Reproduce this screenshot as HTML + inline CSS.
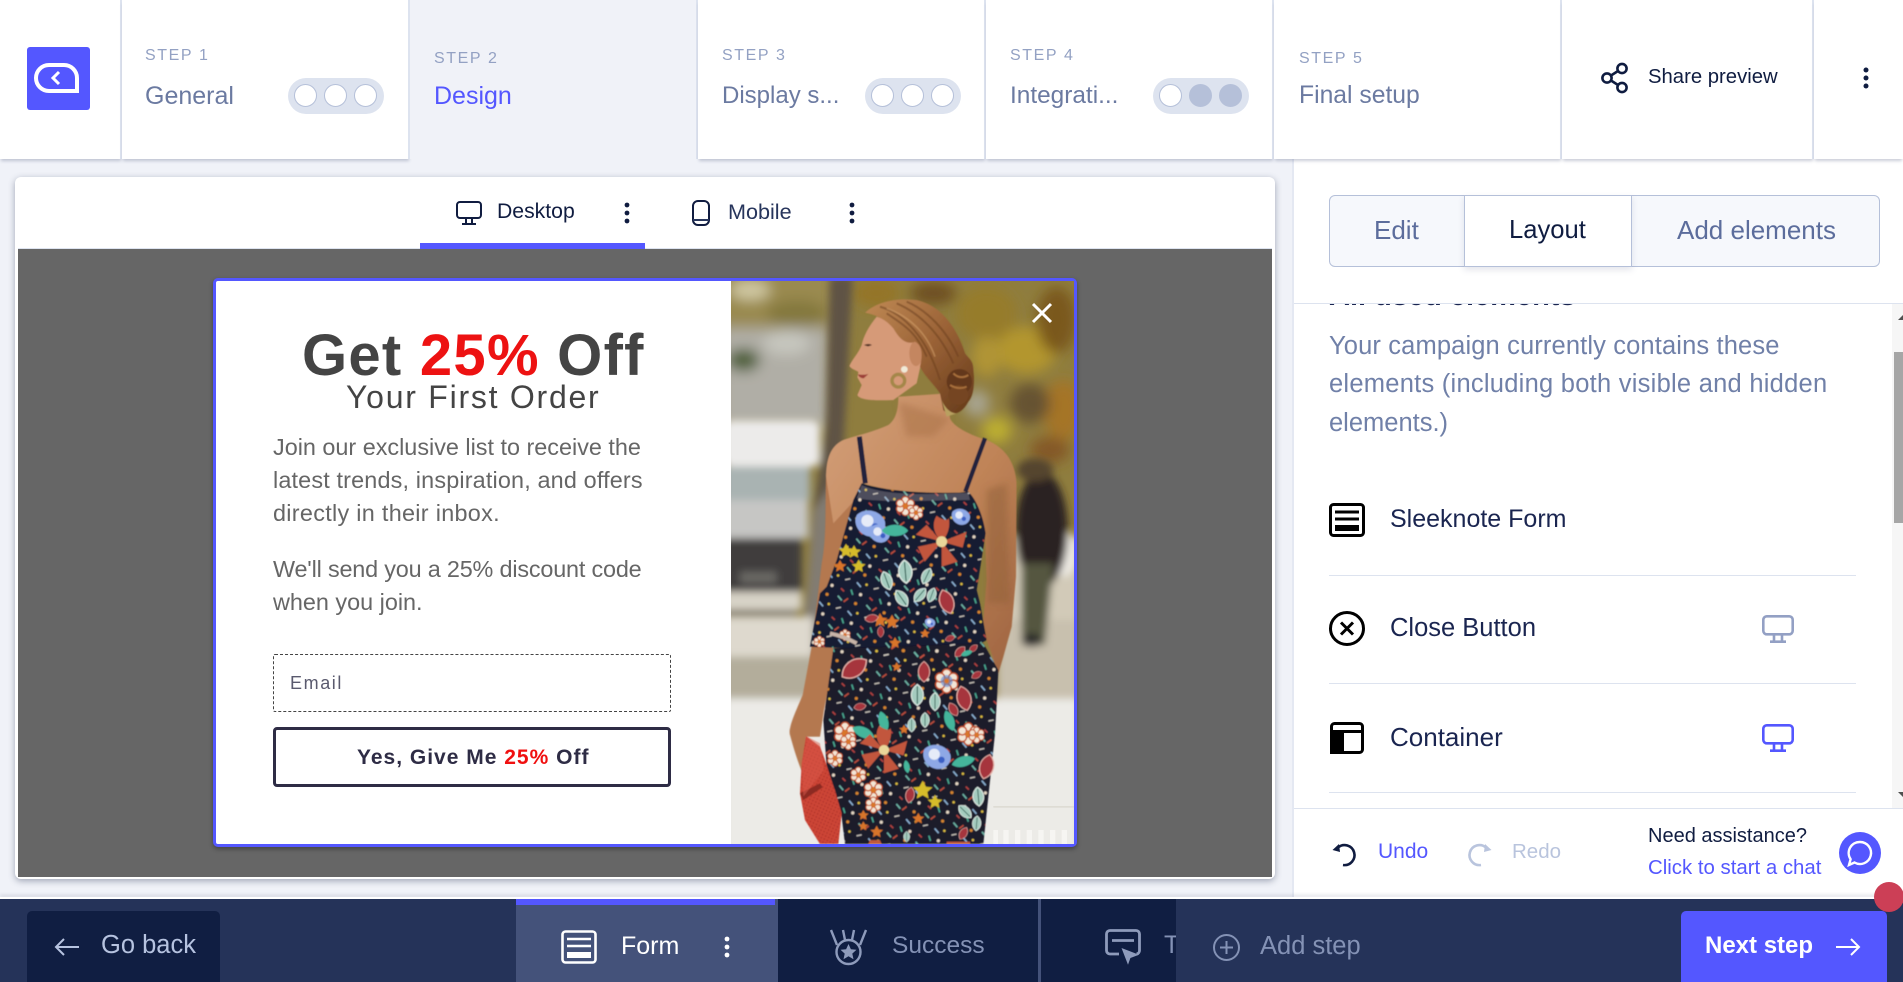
<!DOCTYPE html>
<html lang="en"><head><meta charset="utf-8"><title>Design</title>
<style>
*{box-sizing:border-box}
html,body{margin:0;padding:0;width:1903px;height:982px;overflow:hidden;background:#f0f2f8;font-family:"Liberation Sans",sans-serif}
#r{position:relative;width:1903px;height:982px;overflow:hidden}
.a{position:absolute}
.t{position:absolute;white-space:nowrap;line-height:30px}
.seg{position:absolute;top:0;height:159px;background:#fff;box-shadow:0 3px 3px -1px rgba(70,80,120,.28);border-right:2px solid #dde3ef}
.st{font-size:16px;letter-spacing:1.6px;color:#93a1c3}
.ti{font-size:25px;color:#6b7aa1}
.pill{position:absolute;top:78px;width:96px;height:36px;border-radius:18px;background:#dde3ef}
.pill i{position:absolute;top:6px;width:23px;height:23px;border-radius:50%;background:#fff;border:1px solid #b5c0d9}
.pill i.on{background:#b5c0d9}
.pill i:nth-child(1){left:6px}.pill i:nth-child(2){left:36px}.pill i:nth-child(3){left:66px}
.b{font-size:23.4px;color:#666}
.it{font-size:25.5px;color:#1a2550}
.dv{position:absolute;left:1329px;width:527px;height:1px;background:#dde3ef}
svg{position:absolute;display:block;overflow:visible}
</style></head><body><div id="r">

<!-- right panel bg -->
<div class="a" style="left:1292px;top:159px;width:611px;height:740px;background:#fff;border-left:2px solid #e4e8f2"></div>

<!-- top bar -->
<div class="seg" style="left:0;width:122px"></div>
<div class="a" style="left:27px;top:47px;width:63px;height:63px;background:#5457ff;border-radius:3px"></div>
<svg style="left:27px;top:47px" width="63" height="63" fill="none" stroke="#fff"><path d="M22 18h15a13 13 0 0 1 13 13v13H22a13 13 0 0 1 0-26z" stroke-width="4"/><path d="M32 25l-6 6 6 6" stroke-width="3"/></svg>
<div class="seg" style="left:122px;width:288px"></div>
<div class="a" style="left:410px;top:0;width:288px;height:159px;background:#f0f2f8;border-right:2px solid #dde3ef"></div>
<div class="seg" style="left:698px;width:288px"></div>
<div class="seg" style="left:986px;width:288px"></div>
<div class="seg" style="left:1274px;width:288px"></div>
<div class="seg" style="left:1562px;width:252px"></div>
<div class="seg" style="left:1814px;width:89px;border-right:0"></div>

<div class="t st" style="left:145px;top:41px">STEP 1</div>
<div class="t ti" style="left:145px;top:81px">General</div>
<div class="pill" style="left:288px"><i></i><i></i><i></i></div>
<div class="t st" style="left:434px;top:44px">STEP 2</div>
<div class="t ti" style="left:434px;top:81px;color:#5457ff">Design</div>
<div class="t st" style="left:722px;top:41px">STEP 3</div>
<div class="t ti" style="left:722px;top:81px;font-size:24px">Display s...</div>
<div class="pill" style="left:865px"><i></i><i></i><i></i></div>
<div class="t st" style="left:1010px;top:41px">STEP 4</div>
<div class="t ti" style="left:1010px;top:81px;font-size:24.4px">Integrati...</div>
<div class="pill" style="left:1153px"><i></i><i class="on"></i><i class="on"></i></div>
<div class="t st" style="left:1299px;top:44px">STEP 5</div>
<div class="t ti" style="left:1299px;top:81px;font-size:24.7px">Final setup</div>

<svg style="left:1600px;top:63px" width="30" height="30" fill="none" stroke="#0f1c40" stroke-width="2.6"><circle cx="7" cy="15" r="4.6"/><circle cx="22" cy="5.5" r="4.6"/><circle cx="22" cy="24.5" r="4.6"/><path d="M11 12.5l7-4.5M11 17.5l7 4.5"/></svg>
<div class="t" style="left:1648px;top:62px;font-size:20.3px;color:#0f1c40">Share preview</div>
<svg style="left:1862px;top:66px" width="8" height="24" fill="#0f1c40"><circle cx="4" cy="4" r="2.5"/><circle cx="4" cy="12" r="2.5"/><circle cx="4" cy="20" r="2.5"/></svg>

<!-- canvas card -->
<div class="a" style="left:15px;top:177px;width:1260px;height:702px;background:#fff;border-radius:6px;box-shadow:0 2px 7px rgba(60,70,100,.45)"></div>
<div class="a" style="left:18px;top:248px;width:1254px;height:1px;background:#dde3ef"></div>
<div class="a" style="left:18px;top:249px;width:1254px;height:628px;background:#666"></div>
<div class="a" style="left:420px;top:243px;width:225px;height:6px;background:#5457ff"></div>

<svg style="left:456px;top:201px" width="26" height="24" fill="none" stroke="#101c40" stroke-width="2"><rect x="1" y="1" width="24" height="16" rx="3"/><path d="M10 17v5M16 17v5M6 23h14"/></svg>
<div class="t" style="left:497px;top:197px;font-size:21.2px;color:#101c40">Desktop</div>
<svg style="left:623px;top:201px" width="8" height="24" fill="#101c40"><circle cx="4" cy="4" r="2.4"/><circle cx="4" cy="12" r="2.4"/><circle cx="4" cy="20" r="2.4"/></svg>
<svg style="left:692px;top:200px" width="18" height="26" fill="none" stroke="#101c40" stroke-width="2"><rect x="1" y="1" width="16" height="24" rx="5"/><path d="M1 20h16" stroke="#27355c"/></svg>
<div class="t" style="left:728px;top:197px;font-size:21.6px;color:#27355c">Mobile</div>
<svg style="left:848px;top:201px" width="8" height="24" fill="#101c40"><circle cx="4" cy="4" r="2.4"/><circle cx="4" cy="12" r="2.4"/><circle cx="4" cy="20" r="2.4"/></svg>

<!-- popup -->
<div class="a" style="left:213px;top:278px;width:864px;height:569px;background:#fff;border:3px solid #5457ff;border-radius:5px;box-shadow:0 2px 5px rgba(0,0,0,.35)"></div>
<svg style="left:731px;top:281px" width="343" height="563" viewBox="33 33 1029 1689" preserveAspectRatio="none">
<defs>
<clipPath id="cp"><rect x="33" y="33" width="1029" height="1689"/></clipPath>
<filter id="bl" x="-20%" y="-20%" width="140%" height="140%"><feGaussianBlur stdDeviation="20"/></filter>
<filter id="bs" x="-20%" y="-20%" width="140%" height="140%"><feGaussianBlur stdDeviation="12"/></filter>
<filter id="sm" x="-5%" y="-5%" width="110%" height="110%"><feGaussianBlur stdDeviation="1.6"/></filter>
<filter id="sf" x="-30%" y="-30%" width="160%" height="160%"><feGaussianBlur stdDeviation="10"/></filter>
<linearGradient id="sk" x1="0" y1="0" x2="1" y2="1"><stop offset="0" stop-color="#d4a07a"/><stop offset=".55" stop-color="#c08458"/><stop offset="1" stop-color="#9e6440"/></linearGradient>
<linearGradient id="hr" x1="0" y1="0" x2="1" y2="1"><stop offset="0" stop-color="#c08a55"/><stop offset=".5" stop-color="#9a6236"/><stop offset="1" stop-color="#643a1a"/></linearGradient>
<pattern id="kn" width="10" height="10" patternUnits="userSpaceOnUse" patternTransform="rotate(25)"><rect width="10" height="10" fill="#cc4436"/><circle cx="5" cy="5" r="2" fill="#a83228"/></pattern>
<pattern id="sp" width="90" height="90" patternUnits="userSpaceOnUse" patternTransform="rotate(18)">
<path d="M8 10l16 10" stroke="#6fb6a6" stroke-width="5"/><path d="M40 8l-10 14" stroke="#c2503c" stroke-width="5"/><circle cx="66" cy="16" r="5" fill="#d8862e"/>
<path d="M14 48l14-8" stroke="#d8d2c4" stroke-width="4"/><path d="M50 44l16 10" stroke="#8fb6d8" stroke-width="5"/><circle cx="80" cy="42" r="4" fill="#e0c040"/>
<path d="M10 76l12 6" stroke="#b8443f" stroke-width="5"/><path d="M40 70l10 14" stroke="#4aa88f" stroke-width="5"/><circle cx="72" cy="76" r="5" fill="#e6d8c4"/>
</pattern>
<g id="fa"><g fill="#f3e6d6" stroke="#c4502a" stroke-width="3"><circle cy="-15" r="9"/><circle cx="13" cy="-7" r="9"/><circle cx="13" cy="7" r="9"/><circle cy="15" r="9"/><circle cx="-13" cy="7" r="9"/><circle cx="-13" cy="-7" r="9"/></g><circle r="7" fill="#d8762a"/></g>
<g id="lf"><path d="M0-32C24-15 24 15 0 32C-24 15-24-15 0-32z" fill="#a5ccbf" stroke="#e9f1ea" stroke-width="3"/><path d="M0-26V26" stroke="#2a5a50" stroke-width="3"/></g>
<path id="lt" d="M-36 0C-20-22 20-22 36 0C20 20-20 20-36 0z" fill="#45b59b"/>
<g id="lr"><path d="M0-34C26-15 24 18 0 34C-24 18-26-15 0-34z" fill="#a6363c" stroke="#e6b0a8" stroke-width="3"/></g>
<g id="ll" fill="#c2573c"><path d="M0 0C-20-20-18-40-10-52C0-44 14-40 14-48C18-30 12-12 0 0z"/><path d="M0 0L50-20L42 12z"/><path d="M0 0L32 40L0 50z"/><path d="M0 0L-34 40L-48 10z"/><path d="M0 0L-52-14L-30-34z"/><circle r="11" fill="#ead79a"/></g>
<g id="bu"><path d="M-30-20C-10-38 24-30 34-6C40 16 20 36-4 30C-28 24-40 -2-30-20z" fill="#8ea8e6"/><circle cx="-6" cy="-6" r="14" fill="#e6ebf8"/><circle cx="12" cy="8" r="8" fill="#3a5ec4"/></g>
<path id="ye" d="M0-14L5-5L15-4L7 3L9 13L0 8L-9 13L-7 3L-15-4L-5-5z" fill="#d6bc2c"/>
<path id="oa" d="M0-14L5-5L15-4L7 3L9 13L0 8L-9 13L-7 3L-15-4L-5-5z" fill="#d8742a"/>
<path id="tp" d="M425 640C470 655 560 672 720 668L745 665C770 690 790 740 797 790L770 960L780 1000L800 1110L730 1150L650 1160L560 1170L470 1170L380 1135L270 1130L300 970L320 950L350 870L400 690z"/>
<path id="pt" d="M340 1135L790 1120L835 1200L830 1300L825 1390L790 1722H375L365 1640L320 1490L310 1350z"/>
</defs>
<g clip-path="url(#cp)">
<rect x="33" y="33" width="1029" height="1689" fill="#8f7d3e"/>
<g filter="url(#bl)">
<rect x="0" y="0" width="340" height="160" fill="#9a8a50"/>
<ellipse cx="90" cy="60" rx="60" ry="30" fill="#d0c8a2"/>
<ellipse cx="230" cy="130" rx="90" ry="40" fill="#84783e"/>
<rect x="0" y="170" width="330" height="300" fill="#b0aea6"/>
<ellipse cx="70" cy="270" rx="50" ry="35" fill="#4f603a"/>
<ellipse cx="200" cy="220" rx="70" ry="35" fill="#c6c6be"/>
<ellipse cx="470" cy="70" rx="70" ry="40" fill="#947428"/>
<ellipse cx="800" cy="130" rx="90" ry="80" fill="#967c2c"/>
<ellipse cx="640" cy="70" rx="70" ry="35" fill="#6e5022"/>
<ellipse cx="920" cy="240" rx="90" ry="70" fill="#b3962e"/>
<ellipse cx="1010" cy="150" rx="60" ry="100" fill="#7a581c"/>
<ellipse cx="800" cy="260" rx="45" ry="60" fill="#b09436"/>
<ellipse cx="1030" cy="420" rx="60" ry="90" fill="#a57528"/>
<ellipse cx="830" cy="480" rx="45" ry="40" fill="#bcae32"/>
<ellipse cx="930" cy="400" rx="60" ry="60" fill="#665230"/>
<ellipse cx="990" cy="540" rx="60" ry="40" fill="#845828"/>
<ellipse cx="770" cy="400" rx="40" ry="40" fill="#a8a490"/>
</g>
<g filter="url(#bs)">
<path d="M330 20H398L372 500L345 800L338 960L305 1160H235L262 960L280 720L318 480z" fill="#5e5244"/>
<path d="M280 720L338 640L338 960L305 1160H235L262 960z" fill="#827c72"/>
<rect x="10" y="450" width="290" height="140" rx="25" fill="#ecebea"/>
<rect x="10" y="590" width="260" height="100" fill="#a9b3b2"/>
<rect x="10" y="690" width="255" height="115" fill="#c6c6c4"/>
<rect x="10" y="805" width="235" height="160" fill="#403e3c"/>
<rect x="60" y="905" width="110" height="35" fill="#696864"/>
<rect x="10" y="965" width="235" height="55" fill="#d8d3c7"/>
<rect x="10" y="1020" width="220" height="18" fill="#6e6857"/>
<rect x="10" y="1040" width="270" height="125" fill="#ded9ce"/>
<rect x="10" y="1160" width="340" height="125" fill="#b3ad9b"/>
<rect x="10" y="1285" width="1070" height="460" fill="#ecebe7"/>
<rect x="830" y="800" width="250" height="260" fill="#d2cab8"/>
<rect x="830" y="1050" width="250" height="235" fill="#c8c0ae"/>
<ellipse cx="1030" cy="850" rx="40" ry="70" fill="#eeebe4"/>
<ellipse cx="965" cy="780" rx="78" ry="175" fill="#2a2320"/>
<ellipse cx="945" cy="600" rx="55" ry="35" fill="#55442f"/>
<path d="M905 880H1000L975 1125H905z" fill="#55563f"/>
<ellipse cx="935" cy="1110" rx="28" ry="20" fill="#2a2a2a"/>
</g>
<rect x="820" y="1608" width="242" height="5" fill="#d8d5cc" opacity=".7"/>
<g fill="#f9f8f5" opacity=".8"><rect x="820" y="1680" width="14" height="42"/><rect x="850" y="1680" width="16" height="42"/><rect x="885" y="1680" width="16" height="42"/><rect x="920" y="1680" width="16" height="42"/><rect x="955" y="1680" width="16" height="42"/><rect x="990" y="1680" width="16" height="42"/><rect x="1025" y="1680" width="16" height="42"/></g>
<g filter="url(#sm)">
<!-- arm left -->
<path d="M318 610C315 720 320 800 305 880L275 1130L248 1275C225 1330 205 1370 210 1395C222 1440 235 1480 248 1510L258 1400L300 1400L312 1320L345 1150L395 900L410 680L400 620z" fill="#b47850"/>
<!-- neck / chest / right arm -->
<path d="M535 380C535 425 525 450 505 465C450 490 400 498 365 512C330 530 318 570 318 620L340 760L405 690L430 640C470 655 560 672 720 668L745 665L795 790L800 930L790 1050L800 1110L835 1210L850 1160L875 1070L888 920L890 640C885 580 860 535 800 510C750 495 700 470 690 445L680 370z" fill="url(#sk)"/>
<g filter="url(#sf)"><path d="M535 395L640 430L690 445L640 500L560 500z" fill="#a87048" opacity=".5"/><path d="M800 660L860 640L870 1000L800 1000z" fill="#94603a" opacity=".55"/></g>
<!-- straps -->
<path d="M418 500L436 640" stroke="#20223c" stroke-width="15" fill="none"/>
<path d="M795 505L736 665" stroke="#20223c" stroke-width="13" fill="none"/>
<!-- face -->
<path d="M470 140C445 170 430 200 425 225C415 250 395 270 388 288C395 298 408 300 415 306L412 322L425 345L412 375C420 392 470 392 520 390L590 340L610 250L560 170z" fill="#d69a78"/>
<ellipse cx="588" cy="250" rx="20" ry="38" fill="#c48660"/>
<path d="M432 225q14-6 24 0l-12 4z" fill="#4a2c20"/>
<path d="M413 313q16 3 32-1l-14 13q-12 0-18-12z" fill="#9c4038"/>
<!-- hair -->
<path d="M435 128C470 95 530 82 590 90C660 105 710 170 735 250C745 265 760 270 760 300C765 340 760 380 745 395C725 435 690 440 670 420L660 370C640 340 615 320 600 290C610 250 605 225 585 215C560 225 540 210 520 175C500 150 470 135 435 128z" fill="url(#hr)"/>
<path d="M480 110C550 130 620 200 660 330M530 100C600 130 660 190 700 280M500 130C560 170 590 190 620 260M560 95C620 120 680 180 715 260" stroke="#6e4220" stroke-width="6" fill="none" opacity=".55"/>
<path d="M500 115C570 140 620 190 645 260" stroke="#d8a670" stroke-width="5" fill="none" opacity=".5"/>
<circle cx="718" cy="335" r="38" fill="#64381a"/>
<circle cx="715" cy="375" r="30" fill="#744420"/>
<path d="M700 310q20 20 45 5M690 345q25 15 50 5" stroke="#a8703c" stroke-width="6" fill="none"/>
<path d="M662 380C670 410 690 430 710 430L680 440z" fill="#b8a060"/>
<!-- earring -->
<circle cx="535" cy="332" r="19" fill="none" stroke="#a48748" stroke-width="10"/>
<circle cx="553" cy="298" r="10" fill="#f0ead8"/>
<!-- garment -->
<use href="#tp" fill="#191a30"/>
<use href="#pt" fill="#1a1a2c"/>
<use href="#tp" fill="url(#sp)"/>
<use href="#pt" fill="url(#sp)"/>
<path d="M425 645C500 680 640 672 745 668L750 690C640 690 500 700 410 685z" fill="#c9c4c0" opacity=".3"/>
<!-- bag -->
<path d="M258 1398L300 1430C320 1480 330 1520 345 1560L365 1630L355 1722H300L255 1650L240 1570L245 1480z" fill="url(#kn)"/>
<path d="M240 1570L300 1540L308 1552L250 1590z" fill="#8c2a22"/>
<path d="M262 1400L300 1420L312 1500L250 1580L245 1480z" fill="#dc5c4c" opacity=".5"/>
<!-- florals top -->
<use href="#fa" transform="translate(556 708) scale(1.2)"/>
<use href="#fa" transform="translate(588 728) scale(.9)"/>
<g transform="translate(450 760) scale(1.3)"><use href="#bu"/></g>
<use href="#bu" transform="translate(478 790) scale(.9)"/>
<use href="#lt" transform="translate(525 782) scale(1.1)"/>
<use href="#ll" transform="translate(665 815) scale(1.5)"/>
<use href="#bu" transform="translate(722 740) scale(.8)"/>
<use href="#ye" transform="translate(378 842) scale(1.5)"/>
<use href="#ye" transform="translate(402 845) scale(1.4)"/>
<use href="#ye" transform="translate(416 888) scale(1.4)"/>
<use href="#oa" transform="translate(360 888) scale(1.3)"/>
<use href="#lf" transform="translate(500 932) scale(.9) rotate(-20)"/>
<use href="#lf" transform="translate(556 905) scale(1.1) rotate(-5)"/>
<use href="#lf" transform="translate(620 918) scale(.8) rotate(25)"/>
<use href="#lf" transform="translate(545 985) rotate(-35) scale(.9)"/>
<use href="#lf" transform="translate(600 975) rotate(40) scale(.8)"/>
<use href="#lf" transform="translate(635 975) rotate(20) scale(.7)"/>
<use href="#lr" transform="translate(680 995) rotate(-20) scale(1.1)"/>
<use href="#oa" transform="translate(480 1050) scale(1.5)"/>
<use href="#oa" transform="translate(516 1055) scale(1.5)"/>
<use href="#lr" transform="translate(455 1045) rotate(80) scale(.6)"/>
<use href="#lr" transform="translate(482 1085) scale(.5)"/>
<use href="#oa" transform="translate(525 1118) scale(1.2)"/>
<use href="#oa" transform="translate(615 1090) scale(1)"/>
<use href="#bu" transform="translate(630 1058) scale(.45)"/>
<use href="#lr" transform="translate(720 1145) rotate(45) scale(.6)"/>
<use href="#lr" transform="translate(690 1105) rotate(70) scale(.45)"/>
<use href="#lr" transform="translate(760 1135) rotate(50) scale(.45)"/>
<use href="#fa" transform="translate(298 1115) scale(.7)"/>
<use href="#fa" transform="translate(375 1095) scale(.7)"/>
<path d="M330 1090q40 8 80 30" stroke="#c8b4a8" stroke-width="12" fill="none"/>
<use href="#lt" transform="translate(740 1150) scale(.5) rotate(-20)"/>
<!-- florals pants -->
<use href="#lr" transform="translate(403 1195) rotate(55) scale(1.3)"/>
<use href="#fa" transform="translate(680 1233) scale(1.5)"/>
<circle cx="680" cy="1233" r="18" fill="#5d88d4" opacity=".6"/>
<circle cx="680" cy="1233" r="7" fill="#d8762a"/>
<use href="#lr" transform="translate(612 1205) rotate(0) scale(.9)"/>
<use href="#lf" transform="translate(592 1275) scale(1)"/>
<use href="#lf" transform="translate(645 1295) scale(.85)"/>
<use href="#lr" transform="translate(732 1285) rotate(-15) scale(1.1)"/>
<use href="#lr" transform="translate(700 1318) rotate(-30) scale(.65)"/>
<use href="#lr" transform="translate(420 1310) rotate(80) scale(.55)"/>
<use href="#lr" transform="translate(770 1215) rotate(60) scale(.5)"/>
<use href="#oa" transform="translate(530 1190) scale(1)"/>
<use href="#oa" transform="translate(552 1378) scale(1)"/>
<use href="#lf" transform="translate(575 1365) scale(.65)"/>
<use href="#lf" transform="translate(615 1350) scale(.7)"/>
<use href="#fa" transform="translate(375 1390) scale(1.4)"/>
<use href="#fa" transform="translate(385 1415) scale(1)"/>
<use href="#fa" transform="translate(745 1392) scale(1.4)"/>
<use href="#fa" transform="translate(770 1395) scale(1)"/>
<use href="#lt" transform="translate(430 1388) rotate(25) scale(1)"/>
<use href="#lt" transform="translate(490 1355) rotate(75) scale(.9)"/>
<use href="#lt" transform="translate(688 1352) rotate(70) scale(.9)"/>
<use href="#ll" transform="translate(492 1440) scale(1.4)"/>
<use href="#bu" transform="translate(650 1460) scale(1.2)"/>
<use href="#lt" transform="translate(730 1475) rotate(-15) scale(1)"/>
<use href="#lr" transform="translate(800 1490) rotate(15) scale(1.1)"/>
<use href="#fa" transform="translate(415 1515) scale(1)"/>
<use href="#fa" transform="translate(460 1560) scale(1.2)"/>
<use href="#fa" transform="translate(460 1605) scale(1)"/>
<use href="#fa" transform="translate(345 1465) scale(1)"/>
<use href="#ye" transform="translate(608 1560) scale(2)"/>
<use href="#ye" transform="translate(645 1595) scale(1.5)"/>
<use href="#lt" transform="translate(560 1490) rotate(80) scale(.55)"/>
<use href="#lf" transform="translate(775 1580) rotate(-5) scale(.9)"/>
<use href="#lf" transform="translate(735 1625) rotate(-45) scale(.8)"/>
<use href="#lf" transform="translate(770 1660) rotate(5) scale(.7)"/>
<use href="#lr" transform="translate(730 1690) rotate(30) scale(.6)"/>
<use href="#oa" transform="translate(470 1685) scale(1.3)"/>
<use href="#oa" transform="translate(430 1635) scale(1.1)"/>
<use href="#oa" transform="translate(430 1668) scale(1)"/>
<use href="#lr" transform="translate(570 1575) rotate(10) scale(.7)"/>
<use href="#oa" transform="translate(595 1645) scale(1.2)"/>
<use href="#lf" transform="translate(560 1700) scale(.5)"/>
<path d="M450 1710h30l5 12h-40zM680 1715h70v7h-70z" fill="#c25a3a"/>
</g>
</g>
</svg>
<svg style="left:1032px;top:303px" width="20" height="20" fill="none" stroke="#fff" stroke-width="3"><path d="M1 1l18 18M19 1L1 19"/></svg>

<!-- popup text -->
<div class="t" style="left:302px;top:341px;font-size:58px;font-weight:700;letter-spacing:1.27px;color:#444">Get <span style="color:#ed1212">25%</span> Off</div>
<div class="t" style="left:346px;top:382px;font-size:32px;letter-spacing:1.75px;color:#444">Your First Order</div>
<div class="t b" style="left:273px;top:432px">Join our exclusive list to receive the</div>
<div class="t b" style="left:273px;top:465px;letter-spacing:.16px">latest trends, inspiration, and offers</div>
<div class="t b" style="left:273px;top:498px;letter-spacing:.3px">directly in their inbox.</div>
<div class="t b" style="left:273px;top:554px;letter-spacing:-.18px">We'll send you a 25% discount code</div>
<div class="t b" style="left:273px;top:587px">when you join.</div>
<div class="a" style="left:273px;top:654px;width:398px;height:58px;border:1px dashed #444;border-radius:2px"></div>
<div class="t" style="left:290px;top:668px;font-size:18px;letter-spacing:1.6px;color:#5a5a6e">Email</div>
<div class="a" style="left:273px;top:727px;width:398px;height:60px;border:3px solid #2e2c45;border-radius:4px"></div>
<div class="t" style="left:357px;top:743px;font-size:21px;font-weight:700;letter-spacing:1px;color:#2e2c45">Yes, Give Me <span style="color:#f01010">25%</span> Off</div>

<!-- right panel -->
<div class="a" style="left:1329px;top:195px;width:551px;height:72px;background:#f6f8fc;border:1px solid #b5c0d9;border-radius:6px"></div>
<div class="a" style="left:1464px;top:195px;width:168px;height:72px;background:#fff;border:1px solid #b5c0d9;box-shadow:0 3px 6px rgba(80,90,130,.15)"></div>
<div class="t" style="left:1374px;top:215px;font-size:26px;color:#5c6d9c">Edit</div>
<div class="t" style="left:1509px;top:215px;font-size:25.6px;color:#0f1c40">Layout</div>
<div class="t" style="left:1677px;top:215px;font-size:26px;color:#5c6d9c">Add elements</div>
<div class="a" style="left:1294px;top:303px;width:609px;height:1px;background:#dde3ef"></div>
<div class="a" style="left:1294px;top:304px;width:609px;height:504px;overflow:hidden">
  <div class="t" style="left:35px;top:-23.5px;font-size:29px;font-weight:700;color:#1a2550">All used elements</div>
</div>
<div class="a" style="left:1892px;top:304px;width:11px;height:504px;background:#f6f6f6"></div>
<div class="a" style="left:1894px;top:352px;width:9px;height:171px;background:#a6a6a6"></div>
<svg style="left:1895px;top:312px" width="8" height="10" fill="#505050"><path d="M3 8L8 3V8z"/></svg>
<svg style="left:1895px;top:790px" width="8" height="10" fill="#505050"><path d="M3 2L8 7V2z"/></svg>

<div class="t" style="left:1329px;top:331px;font-size:25.5px;letter-spacing:.13px;color:#7080a8">Your campaign currently contains these</div>
<div class="t" style="left:1329px;top:369px;font-size:25.5px;letter-spacing:.25px;color:#7080a8">elements (including both visible and hidden</div>
<div class="t" style="left:1329px;top:408px;font-size:25.5px;color:#7080a8">elements.)</div>

<svg style="left:1329px;top:503px" width="36" height="34" fill="none" stroke="#000"><rect x="1.5" y="1.5" width="33" height="31" rx="3" stroke-width="3"/><path d="M6 9h24M6 16h24" stroke-width="3"/><rect x="6" y="22" width="24" height="6" fill="#000" stroke="none"/></svg>
<div class="t it" style="left:1390px;top:504px;font-size:25px">Sleeknote Form</div>
<div class="dv" style="top:575px"></div>
<svg style="left:1329px;top:611px" width="36" height="35" fill="none" stroke="#000" stroke-width="3"><ellipse cx="18" cy="17.5" rx="16.5" ry="16"/><path d="M12 11.5l12 12M24 11.5l-12 12"/></svg>
<div class="t it" style="left:1390px;top:613px">Close Button</div>
<svg style="left:1762px;top:615px" width="32" height="28" fill="none" stroke="#93a0c4" stroke-width="2.6"><rect x="1.3" y="1.3" width="29.4" height="18" rx="3.5"/><path d="M12 20v6M20 20v6M8 26.7h16"/></svg>
<div class="dv" style="top:683px"></div>
<svg style="left:1330px;top:722px" width="34" height="32" fill="none" stroke="#000" stroke-width="3"><rect x="1.5" y="1.5" width="31" height="29" rx="3"/><path d="M1.5 9.5h31"/><rect x="1.5" y="9.5" width="11" height="21" fill="#000"/></svg>
<div class="t it" style="left:1390px;top:722px;font-size:26px">Container</div>
<svg style="left:1762px;top:724px" width="32" height="28" fill="none" stroke="#5457ff" stroke-width="2.6"><rect x="1.3" y="1.3" width="29.4" height="18" rx="3.5"/><path d="M12 20v6M20 20v6M8 26.7h16"/></svg>
<div class="dv" style="top:792px"></div>
<div class="a" style="left:1294px;top:808px;width:609px;height:1px;background:#dde3ef"></div>

<svg style="left:1331px;top:842px" width="26" height="24" fill="none" stroke="#101c40" stroke-width="2.6"><path d="M7 5.500A10 10 0 1 1 12 23"/><path d="M1.500 8L8 2l1 8z" fill="#101c40" stroke="none"/></svg>
<div class="t" style="left:1378px;top:837px;font-size:21px;color:#5457ff">Undo</div>
<svg style="left:1467px;top:842px" width="26" height="24" fill="none" stroke="#b9c4dd" stroke-width="2.6"><path d="M19 5.500A10 10 0 1 0 14 23"/><path d="M24.500 8L18 2l-1 8z" fill="#b9c4dd" stroke="none"/></svg>
<div class="t" style="left:1512px;top:837px;font-size:20.5px;color:#b9c4dd">Redo</div>
<div class="t" style="left:1648px;top:821px;font-size:20px;color:#101c40">Need assistance?</div>
<div class="t" style="left:1648px;top:853px;font-size:20.4px;color:#5457ff">Click to start a chat</div>
<div class="a" style="left:1839px;top:832px;width:42px;height:42px;border-radius:50%;background:#5457ff"></div>
<svg style="left:1839px;top:832px" width="42" height="42" fill="none" stroke="#fff" stroke-width="2.4"><path d="M21 10a11 11 0 1 1-5.500 20.500L10 33l1.600-5.800A11 11 0 0 1 21 10z"/></svg>

<!-- bottom bar -->
<div class="a" style="left:0;top:897px;width:1903px;height:2px;background:#fff;box-shadow:0 -2px 3px rgba(60,70,100,.2)"></div>
<div class="a" style="left:0;top:899px;width:1903px;height:83px;background:#253359"></div>
<div class="a" style="left:27px;top:911px;width:193px;height:71px;background:#101e42;border-radius:5px 5px 0 0"></div>
<svg style="left:54px;top:936px" width="26" height="22" fill="none" stroke="#b6c3e0" stroke-width="2"><path d="M25 11H2M10 3l-8 8 8 8"/></svg>
<div class="t" style="left:101px;top:930px;font-size:25.500px;color:#b6c3e0">Go back</div>

<div class="a" style="left:516px;top:899px;width:262px;height:83px;background:#44527a"></div>
<div class="a" style="left:516px;top:899px;width:259px;height:6px;background:#5457ff"></div>
<svg style="left:561px;top:930px" width="36" height="34" fill="none" stroke="#fff"><rect x="1.500" y="1.500" width="33" height="31" rx="3" stroke-width="2.600"/><path d="M6 9h24M6 16h24" stroke-width="2.600"/><rect x="6" y="22" width="24" height="6" fill="#fff" stroke="none"/></svg>
<div class="t" style="left:621px;top:931px;font-size:25px;color:#fff">Form</div>
<svg style="left:723px;top:935px" width="8" height="24" fill="#fff"><circle cx="4" cy="4" r="2.400"/><circle cx="4" cy="12" r="2.400"/><circle cx="4" cy="20" r="2.400"/></svg>

<div class="a" style="left:778px;top:899px;width:398px;height:83px;background:#101e42"></div>
<div class="a" style="left:1038px;top:899px;width:3px;height:83px;background:#44527a"></div>
<svg style="left:830px;top:929px" width="37" height="36" fill="none" stroke="#8e9bbb" stroke-width="2.400"><path d="M1 1l6 15M13 1l2 10M24 1l-2 10M36 1l-6 15"/><circle cx="18.500" cy="23" r="12"/><path d="M18.500 15l2.400 5.200 5.600.6-4.200 3.800 1.200 5.600-5-2.900-5 2.900 1.200-5.600-4.200-3.800 5.600-.6z" fill="#8e9bbb" stroke="none"/></svg>
<div class="t" style="left:892px;top:931px;font-size:24.500px;color:#8492b5">Success</div>
<svg style="left:1105px;top:929px" width="37" height="37" fill="none" stroke="#8e9bbb" stroke-width="2.800"><path d="M14 25H5a3.500 3.500 0 0 1-3.500-3.500V5A3.500 3.500 0 0 1 5 1.500h26A3.500 3.500 0 0 1 34.500 5v16.500a3.500 3.500 0 0 1-3 3.500"/><path d="M7 11.500h22"/><path d="M16.500 19L34 25.700l-8.600 3.300-2.400 6.700z" fill="#8e9bbb" stroke="none"/></svg>
<div class="a" style="left:1164px;top:899px;width:12px;height:83px;overflow:hidden"><div class="t" style="left:0;top:31px;font-size:25px;color:#8492b5">Teaser</div></div>

<svg style="left:1213px;top:934px" width="27" height="27" fill="none" stroke="#8492b5" stroke-width="2"><circle cx="13.500" cy="13.500" r="12.500"/><path d="M13.500 7v13M7 13.500h13"/></svg>
<div class="t" style="left:1260px;top:931px;font-size:25.500px;color:#8492b5">Add step</div>
<div class="a" style="left:1681px;top:911px;width:206px;height:71px;background:#5457ff;border-radius:5px 5px 0 0"></div>
<div class="t" style="left:1705px;top:931px;font-size:24px;font-weight:700;color:#fff">Next step</div>
<svg style="left:1835px;top:936px" width="26" height="22" fill="none" stroke="#fff" stroke-width="2"><path d="M1 11h23M16 3l8 8-8 8"/></svg>
<div class="a" style="left:1874px;top:882px;width:30px;height:30px;border-radius:50%;background:#cc3f56"></div>
</div></body></html>
